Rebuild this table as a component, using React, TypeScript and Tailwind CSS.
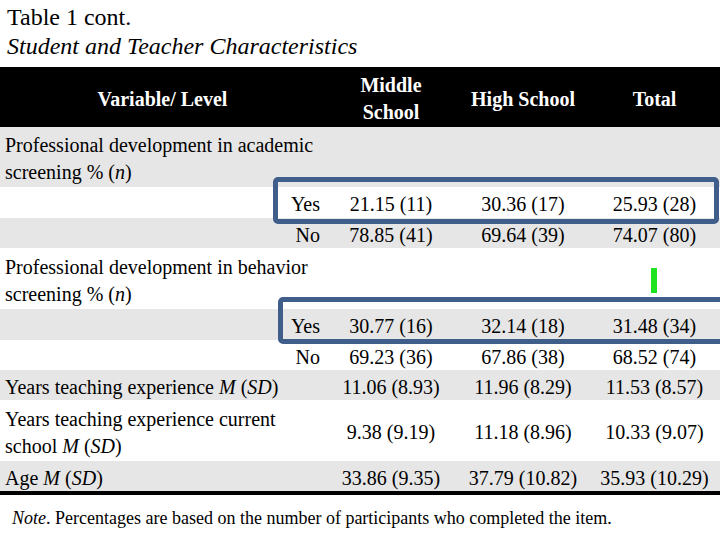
const serif = { fontFamily: '"Liberation Serif", "Times New Roman", serif' };

type Row = {
  label: React.ReactNode;
  sub?: boolean;
  values?: [string, string, string];
  h: string;
  gray: boolean;
};

const rows: Row[] = [
  {
    label: (
      <>
        Professional development in academic
        <br />
        screening % (<i>n</i>)
      </>
    ),
    h: "h-[60px]",
    gray: true,
  },
  { label: "Yes", sub: true, values: ["21.15 (11)", "30.36 (17)", "25.93 (28)"], h: "h-[31px]", gray: false },
  { label: "No", sub: true, values: ["78.85 (41)", "69.64 (39)", "74.07 (80)"], h: "h-[30px]", gray: true },
  {
    label: (
      <>
        Professional development in behavior
        <br />
        screening % (<i>n</i>)
      </>
    ),
    h: "h-[61px]",
    gray: false,
  },
  { label: "Yes", sub: true, values: ["30.77 (16)", "32.14 (18)", "31.48 (34)"], h: "h-[31px]", gray: true },
  { label: "No", sub: true, values: ["69.23 (36)", "67.86 (38)", "68.52 (74)"], h: "h-[30px]", gray: false },
  {
    label: (
      <>
        Years teaching experience <i>M</i> (<i>SD</i>)
      </>
    ),
    values: ["11.06 (8.93)", "11.96 (8.29)", "11.53 (8.57)"],
    h: "h-[30px]",
    gray: true,
  },
  {
    label: (
      <>
        Years teaching experience current
        <br />
        school <i>M</i> (<i>SD</i>)
      </>
    ),
    values: ["9.38 (9.19)", "11.18 (8.96)", "10.33 (9.07)"],
    h: "h-[61px]",
    gray: false,
  },
  {
    label: (
      <>
        Age <i>M</i> (<i>SD</i>)
      </>
    ),
    values: ["33.86 (9.35)", "37.79 (10.82)", "35.93 (10.29)"],
    h: "h-[30px]",
    gray: true,
  },
];

export default function App() {
  return (
    <div className="relative w-[720px] h-[540px] overflow-hidden bg-white text-black" style={serif}>
      {/* Caption */}
      <div className="h-[67px] pl-[7px] pt-[3px]">
        <div className="text-[24px] leading-[29px]">Table 1 cont.</div>
        <div className="text-[24px] leading-[29px] italic">Student and Teacher Characteristics</div>
      </div>

      {/* Header */}
      <div className="grid grid-cols-[325px_132px_132px_131px] h-[60px] pt-[4px] bg-black text-white font-bold text-[20px] leading-[27px]">
        <div className="flex items-center justify-center">Variable/ Level</div>
        <div className="flex items-center justify-center text-center">
          Middle
          <br />
          School
        </div>
        <div className="flex items-center justify-center">High School</div>
        <div className="flex items-center justify-center">Total</div>
      </div>

      {/* Body */}
      {rows.map((r, i) => (
        <div
          key={i}
          className={`grid grid-cols-[325px_132px_132px_131px] ${r.h} pt-[4px] ${r.gray ? "bg-[#e7e6e6]" : "bg-white"} text-[20px] leading-[27px]`}
        >
          <div className={`flex items-center ${r.sub ? "justify-end pr-[5px]" : "pl-[5px]"}`}>
            <div>{r.label}</div>
          </div>
          {r.values
            ? r.values.map((v, j) => (
                <div key={j} className="flex items-center justify-center">
                  {v}
                </div>
              ))
            : [0, 1, 2].map((j) => <div key={j} />)}
        </div>
      ))}
      <div className="h-[4px] bg-black" />

      {/* Note */}
      <div className="pl-[12px] pt-[12px] text-[18px] leading-[22px]">
        <i>Note</i>. Percentages are based on the number of participants who completed the item.
      </div>

      {/* Highlights drawn over the table */}
      <div className="absolute left-[273px] top-[177px] w-[446px] h-[47px] border-[5px] border-[#3f5f8a] rounded-[5px]" />
      <div className="absolute left-[278px] top-[297px] w-[450px] h-[47px] border-[5px] border-[#3f5f8a] rounded-[5px]" />
      <div className="absolute left-[651px] top-[268px] w-[6px] h-[25px] bg-[#1ee31e]" />
    </div>
  );
}
